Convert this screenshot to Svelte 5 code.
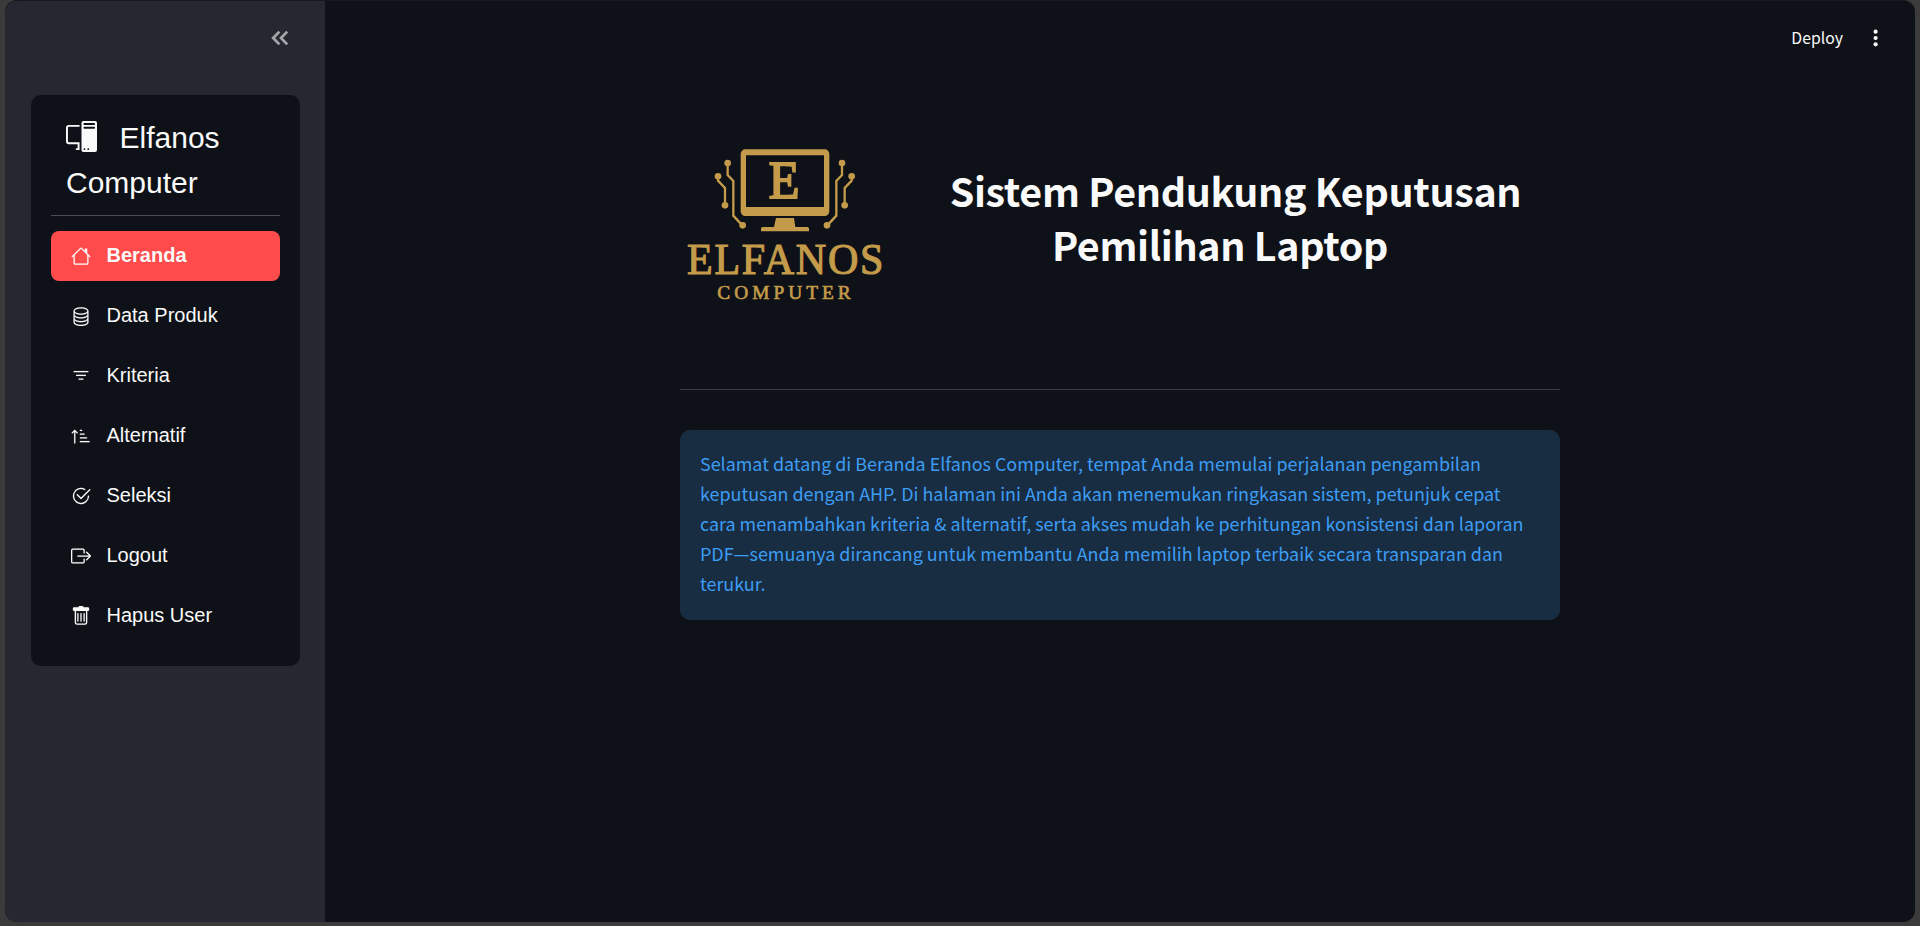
<script>
  const items = [
    {
      label: 'Beranda',
      active: true,
      paths: [
        'M2 13.5V7h1v6.5a.5.5 0 0 0 .5.5h9a.5.5 0 0 0 .5-.5V7h1v6.5a1.5 1.5 0 0 1-1.5 1.5h-9A1.5 1.5 0 0 1 2 13.5zm11-11V6l-2-2V2.5a.5.5 0 0 1 .5-.5h1a.5.5 0 0 1 .5.5z',
        'M7.293 1.5a1 1 0 0 1 1.414 0l6.647 6.646a.5.5 0 0 1-.708.708L8 2.207 1.354 8.854a.5.5 0 1 1-.708-.708L7.293 1.5z'
      ]
    },
    {
      label: 'Data Produk',
      paths: [
        'M4.318 2.687C5.234 2.271 6.536 2 8 2s2.766.27 3.682.687C12.644 3.125 13 3.627 13 4c0 .374-.356.875-1.318 1.313C10.766 5.729 9.464 6 8 6s-2.766-.27-3.682-.687C3.356 4.875 3 4.373 3 4c0-.374.356-.875 1.318-1.313ZM13 5.698V7c0 .374-.356.875-1.318 1.313C10.766 8.729 9.464 9 8 9s-2.766-.27-3.682-.687C3.356 7.875 3 7.373 3 7V5.698c.271.202.58.378.904.525C4.978 6.711 6.427 7 8 7s3.022-.289 4.096-.777A4.92 4.92 0 0 0 13 5.698ZM14 4c0-1.007-.875-1.755-1.904-2.223C11.022 1.289 9.573 1 8 1s-3.022.289-4.096.777C2.875 2.245 2 2.993 2 4v9c0 1.007.875 1.755 1.904 2.223C4.978 15.71 6.427 16 8 16s3.022-.289 4.096-.777C13.125 14.755 14 14.007 14 13V4Zm-1 4.698V10c0 .374-.356.875-1.318 1.313C10.766 11.729 9.464 12 8 12s-2.766-.27-3.682-.687C3.356 10.875 3 10.373 3 10V8.698c.271.202.58.378.904.525C4.978 9.71 6.427 10 8 10s3.022-.289 4.096-.777A4.92 4.92 0 0 0 13 8.698Zm0 3V13c0 .374-.356.875-1.318 1.313C10.766 14.729 9.464 15 8 15s-2.766-.27-3.682-.687C3.356 13.875 3 13.373 3 13v-1.302c.271.202.58.378.904.525C4.978 12.71 6.427 13 8 13s3.022-.289 4.096-.777c.324-.147.633-.323.904-.525Z'
      ]
    },
    {
      label: 'Kriteria',
      paths: [
        'M6 10.5a.5.5 0 0 1 .5-.5h3a.5.5 0 0 1 0 1h-3a.5.5 0 0 1-.5-.5zm-2-3a.5.5 0 0 1 .5-.5h7a.5.5 0 0 1 0 1h-7a.5.5 0 0 1-.5-.5zm-2-3a.5.5 0 0 1 .5-.5h11a.5.5 0 0 1 0 1h-11a.5.5 0 0 1-.5-.5z'
      ]
    },
    {
      label: 'Alternatif',
      paths: [
        'M3.5 13.5a.5.5 0 0 1-1 0V4.707L1.354 5.854a.5.5 0 1 1-.708-.708l2-1.999.007-.007a.498.498 0 0 1 .7.006l2 2a.5.5 0 1 1-.707.708L3.5 4.707V13.5zm4-9.5a.5.5 0 0 1 0-1h1a.5.5 0 0 1 0 1h-1zm0 3a.5.5 0 0 1 0-1h3a.5.5 0 0 1 0 1h-3zm0 3a.5.5 0 0 1 0-1h5a.5.5 0 0 1 0 1h-5zM7 12.5a.5.5 0 0 0 .5.5h7a.5.5 0 0 0 0-1h-7a.5.5 0 0 0-.5.5z'
      ]
    },
    {
      label: 'Seleksi',
      paths: [
        'M2.5 8a5.5 5.5 0 0 1 8.25-4.764.5.5 0 0 0 .5-.866A6.5 6.5 0 1 0 14.5 8a.5.5 0 0 0-1 0 5.5 5.5 0 1 1-11 0z',
        'M15.354 3.354a.5.5 0 0 0-.708-.708L8 9.293 5.354 6.646a.5.5 0 1 0-.708.708l3 3a.5.5 0 0 0 .708 0l7-7z'
      ]
    },
    {
      label: 'Logout',
      paths: [
        'M10 12.5a.5.5 0 0 1-.5.5h-8a.5.5 0 0 1-.5-.5v-9a.5.5 0 0 1 .5-.5h8a.5.5 0 0 1 .5.5v2a.5.5 0 0 0 1 0v-2A1.5 1.5 0 0 0 9.5 2h-8A1.5 1.5 0 0 0 0 3.5v9A1.5 1.5 0 0 0 1.5 14h8a1.5 1.5 0 0 0 1.5-1.5v-2a.5.5 0 0 0-1 0v2z',
        'M15.854 8.354a.5.5 0 0 0 0-.708l-3-3a.5.5 0 0 0-.708.708L14.293 7.5H5.5a.5.5 0 0 0 0 1h8.793l-2.147 2.146a.5.5 0 0 0 .708.708l3-3z'
      ]
    },
    {
      label: 'Hapus User',
      paths: [
        'M5.5 5.5A.5.5 0 0 1 6 6v6a.5.5 0 0 1-1 0V6a.5.5 0 0 1 .5-.5zm2.5 0a.5.5 0 0 1 .5.5v6a.5.5 0 0 1-1 0V6a.5.5 0 0 1 .5-.5zm3 .5a.5.5 0 0 0-1 0v6a.5.5 0 0 0 1 0V6z',
        'M14.5 3a1 1 0 0 1-1 1H13v9a2 2 0 0 1-2 2H5a2 2 0 0 1-2-2V4h-.5a1 1 0 0 1-1-1V2a1 1 0 0 1 1-1H6a1 1 0 0 1 1-1h2a1 1 0 0 1 1 1h3.5a1 1 0 0 1 1 1v1zM4.118 4 4 4.059V13a1 1 0 0 0 1 1h6a1 1 0 0 0 1-1V4.059L11.882 4H4.118zM2.5 3V2h11v1h-11z'
      ]
    }
  ];

  const welcome = [
    'Selamat datang di Beranda Elfanos Computer, tempat Anda memulai perjalanan pengambilan',
    'keputusan dengan AHP. Di halaman ini Anda akan menemukan ringkasan sistem, petunjuk cepat',
    'cara menambahkan kriteria & alternatif, serta akses mudah ke perhitungan konsistensi dan laporan',
    'PDF—semuanya dirancang untuk membantu Anda memilih laptop terbaik secara transparan dan',
    'terukur.'
  ];
</script>

<div class="window">
  <aside>
    <div class="side-top">
      <svg class="collapse" viewBox="0 0 18 16" width="18" height="16" aria-hidden="true">
        <path d="M8.4 1.6 2.2 8l6.2 6.4M16.2 1.6 10 8l6.2 6.4" />
      </svg>
    </div>
    <nav>
      <div class="brand">
        <svg viewBox="0 0 16 16" width="31" height="31" fill="currentColor" aria-hidden="true">
          <path d="M8 1a1 1 0 0 1 1-1h6a1 1 0 0 1 1 1v14a1 1 0 0 1-1 1H9a1 1 0 0 1-1-1V1Zm1 13.5a.5.5 0 1 0 1 0 .5.5 0 0 0-1 0Zm2 0a.5.5 0 1 0 1 0 .5.5 0 0 0-1 0ZM9.5 1a.5.5 0 0 0 0 1h5a.5.5 0 0 0 0-1h-5ZM9 3.5a.5.5 0 0 0 .5.5h5a.5.5 0 0 0 0-1h-5a.5.5 0 0 0-.5.5ZM1.5 2A1.5 1.5 0 0 0 0 3.5v7A1.5 1.5 0 0 0 1.5 12H6v2h-.5a.5.5 0 0 0 0 1H7v-4H1.5a.5.5 0 0 1-.5-.5v-7a.5.5 0 0 1 .5-.5H7V2H1.5Z" />
        </svg>
        <span>Elfanos</span>
        <span class="second">Computer</span>
      </div>
      <hr />
      <ul>
        {#each items as item}
          <li class:active={item.active}>
            <svg viewBox="0 0 16 16" width="20" height="20" fill="currentColor" aria-hidden="true">
              {#each item.paths as d}<path {d} />{/each}
            </svg>
            <span>{item.label}</span>
          </li>
        {/each}
      </ul>
    </nav>
  </aside>

  <main>
    <header>
      <span>Deploy</span>
      <svg viewBox="0 0 6 18" width="6" height="18" fill="#fafafa" aria-hidden="true">
        <circle cx="2.6" cy="2.7" r="2.1" /><circle cx="2.6" cy="9" r="2.1" /><circle cx="2.6" cy="15.3" r="2.1" />
      </svg>
    </header>

    <section class="content">
      <div class="hero">
        <svg class="logo" viewBox="30 0 630 570" width="210" height="190" fill="#c39b4a">
          <path fill-rule="evenodd" d="M226 58h238a14 14 0 0 1 14 14v172a14 14 0 0 1-14 14H226a14 14 0 0 1-14-14V72a14 14 0 0 1 14-14zM228 76v155h234V76z" />
          <path d="M318 264h54l4 27h36a5 5 0 0 1 5 5v8H273v-8a5 5 0 0 1 5-5h34z" />
          <g fill="none" stroke="#c39b4a" stroke-width="7">
            <path d="M173 100v35l17 18v104l27 29M144 140v12l21 22v52" />
            <path d="M516 100v35l-17 18v104l-27 29M545 140v12l-21 22v52" />
          </g>
          <circle cx="173" cy="99" r="10" /><circle cx="144" cy="139" r="10" />
          <circle cx="165" cy="226" r="10" /><circle cx="218" cy="286" r="10" />
          <circle cx="516" cy="99" r="10" /><circle cx="545" cy="139" r="10" />
          <circle cx="524" cy="226" r="10" /><circle cx="471" cy="286" r="10" />
          <text class="mark" x="296" y="205" textLength="92" lengthAdjust="spacingAndGlyphs" font-size="156">E</text>
          <text class="name" transform="scale(.95 1)" x="54" y="432" textLength="620" font-size="133">ELFANOS</text>
          <text class="sub" x="142" y="507" textLength="400" font-size="58">COMPUTER</text>
        </svg>
        <h1>Sistem Pendukung Keputusan<br /><span>Pemilihan Laptop</span></h1>
      </div>
      <hr />
      <div class="alert">
        {#each welcome as line}<div>{line}</div>{/each}
      </div>
    </section>
  </main>
</div>

<style>
  :global(body) {
    background: #3b3b3b;
  }
  .window {
    box-sizing: border-box;
    display: flex;
    height: 922px;
    margin: 0 5px;
    border-top: 1px solid #15181e;
    border-radius: 12px;
    overflow: hidden;
    background: #0e1117;
    color: #fafafa;
    font-family: 'Noto Sans CJK SC', sans-serif;
  }
  aside {
    box-sizing: border-box;
    flex: none;
    width: 320px;
    padding: 0 25px 0 26px;
    background: #262730;
  }
  .side-top {
    display: flex;
    justify-content: flex-end;
    align-items: center;
    height: 94px;
    padding: 0 11px 20px 0;
    box-sizing: border-box;
  }
  .collapse {
    fill: none;
    stroke: #a3a4a8;
    stroke-width: 2.8;
  }
  nav {
    box-sizing: border-box;
    height: 571px;
    padding: 20px;
    border-radius: 10px;
    background: #0e1117;
    font-family: 'Liberation Sans', sans-serif;
  }
  .brand {
    display: grid;
    grid-template-columns: 31px 1fr;
    column-gap: 22.5px;
    align-items: center;
    padding-left: 15px;
    font-size: 30px;
    line-height: 45px;
  }
  .brand svg {
    margin-bottom: 2px;
  }
  .second {
    grid-column: 1 / 3;
  }
  nav hr {
    height: 1px;
    margin: 10px 0 15px;
    border: 0;
    background: #494c4f;
  }
  ul {
    display: grid;
    gap: 10px;
    margin: 0;
    padding: 0;
    list-style: none;
  }
  li {
    box-sizing: border-box;
    display: flex;
    align-items: center;
    gap: 15.5px;
    height: 50px;
    padding: 0 0 1px 20px;
    border-radius: 8px;
    font-size: 20px;
  }
  li svg {
    stroke: currentColor;
    stroke-width: 0.08;
  }
  li.active {
    background: #ff4b4b;
    font-weight: 700;
  }
  main {
    flex: 1;
  }
  header {
    box-sizing: border-box;
    display: flex;
    justify-content: flex-end;
    align-items: center;
    gap: 30px;
    height: 74px;
    padding: 0 36px 1px 0;
    font-size: 15.8px;
  }
  header span {
    margin-bottom: 1px;
  }
  .content {
    width: 880px;
    margin: 0 auto;
  }
  .hero {
    display: flex;
    align-items: flex-start;
    height: 314px;
    padding-top: 55px;
    box-sizing: border-box;
  }
  .logo {
    flex: none;
  }
  .logo text {
    font-family: 'Liberation Serif', serif;
    stroke: #c39b4a;
    stroke-width: 3.5;
  }
  .logo .mark {
    stroke-width: 6;
  }
  .logo .sub {
    stroke-width: 2;
  }
  h1 {
    flex: 1;
    margin: 33px 0 0 21px;
    font-size: 39.4px;
    font-weight: 600;
    letter-spacing: -0.32px;
    line-height: 54px;
    text-align: center;
    white-space: nowrap;
  }
  h1 span {
    padding-right: 31px;
  }
  .content hr {
    height: 1px;
    margin: 0 0 40px;
    border: 0;
    background: #3b3d42;
  }
  .alert {
    box-sizing: border-box;
    height: 190px;
    padding: 18px 20px;
    border-radius: 10px;
    background: #182c42;
    color: #3d9df3;
    font-size: 17.92px;
    line-height: 30px;
    white-space: nowrap;
  }
</style>
